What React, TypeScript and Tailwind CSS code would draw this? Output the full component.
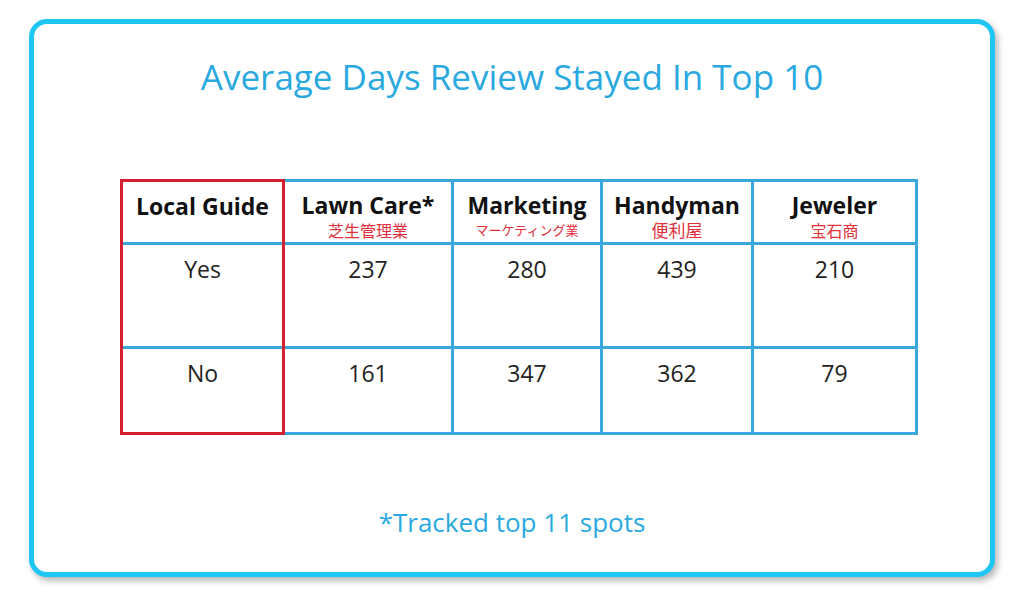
import React from 'react';

const headers = [
  { en: 'Lawn Care*', jp: '芝生管理業', jpSize: 'text-[16px]' },
  { en: 'Marketing', jp: 'マーケティング業', jpSize: 'text-[13px]' },
  { en: 'Handyman', jp: '便利屋', jpSize: 'text-[17px]' },
  { en: 'Jeweler', jp: '宝石商', jpSize: 'text-[16px]' },
];

const rows = [
  { label: 'Yes', values: ['237', '280', '439', '210'], h: 'h-[104px] border-b-[3px]' },
  { label: 'No', values: ['161', '347', '362', '79'], h: 'h-[83px]' },
];

const colW = ['w-[169px]', 'w-[149px]', 'w-[151px]', 'w-[164px]'];

export default function App() {
  return (
    <div className="w-[1024px] h-[592px] bg-white pt-[19px] pl-[29px] font-['Open_Sans','Noto_Sans_CJK_JP',sans-serif]">
      <div className="w-[966px] h-[558px] border-[5px] border-[#1ec6f3] rounded-[18px] bg-white shadow-[3px_4px_6px_rgba(0,0,0,0.28)] flex flex-col">
        {/* Title */}
        <h1 className="mt-[31px] text-center text-[35px] leading-[44px] text-[#2aa9e0]">
          Average Days Review Stayed In Top 10
        </h1>

        {/* Table */}
        <div className="mt-[80px] ml-[86px] flex">
          {/* Highlighted first column */}
          <div className="w-[165px] border-[3px] border-[#d4202f] flex flex-col">
            <div className="h-[63px] border-b-[3px] border-[#3aa7de] pt-[11px] text-center text-[23px] leading-[26px] font-bold text-[#111]">
              Local Guide
            </div>
            {rows.map((r) => (
              <div key={r.label} className={`${r.h} border-[#3aa7de] pt-[10px] text-center text-[23px] leading-[28px] text-[#222]`}>
                {r.label}
              </div>
            ))}
          </div>

          <div className="flex flex-col border-y-[3px] border-[#3aa7de]">
            <div className="flex h-[63px] border-b-[3px] border-[#3aa7de]">
              {headers.map((h, i) => (
                <div key={h.en} className={`${colW[i]} border-r-[3px] border-[#3aa7de] pt-[10px] flex flex-col items-center`}>
                  <span className="text-[23px] leading-[26px] font-bold text-[#111]">{h.en}</span>
                  <span className={`${h.jpSize} mt-[3px] leading-[18px] text-[#e0303c] font-['Noto_Sans_CJK_JP',sans-serif]`}>{h.jp}</span>
                </div>
              ))}
            </div>
            {rows.map((r) => (
              <div key={r.label} className={`flex ${r.h} border-[#3aa7de]`}>
                {r.values.map((v, i) => (
                  <div key={i} className={`${colW[i]} border-r-[3px] border-[#3aa7de] pt-[10px] text-center text-[23px] leading-[28px] text-[#222]`}>
                    {v}
                  </div>
                ))}
              </div>
            ))}
          </div>
        </div>

        {/* Footnote */}
        <p className="mt-[72px] text-center text-[26px] leading-[30px] text-[#2aa9e0]">*Tracked top 11 spots</p>
      </div>
    </div>
  );
}
